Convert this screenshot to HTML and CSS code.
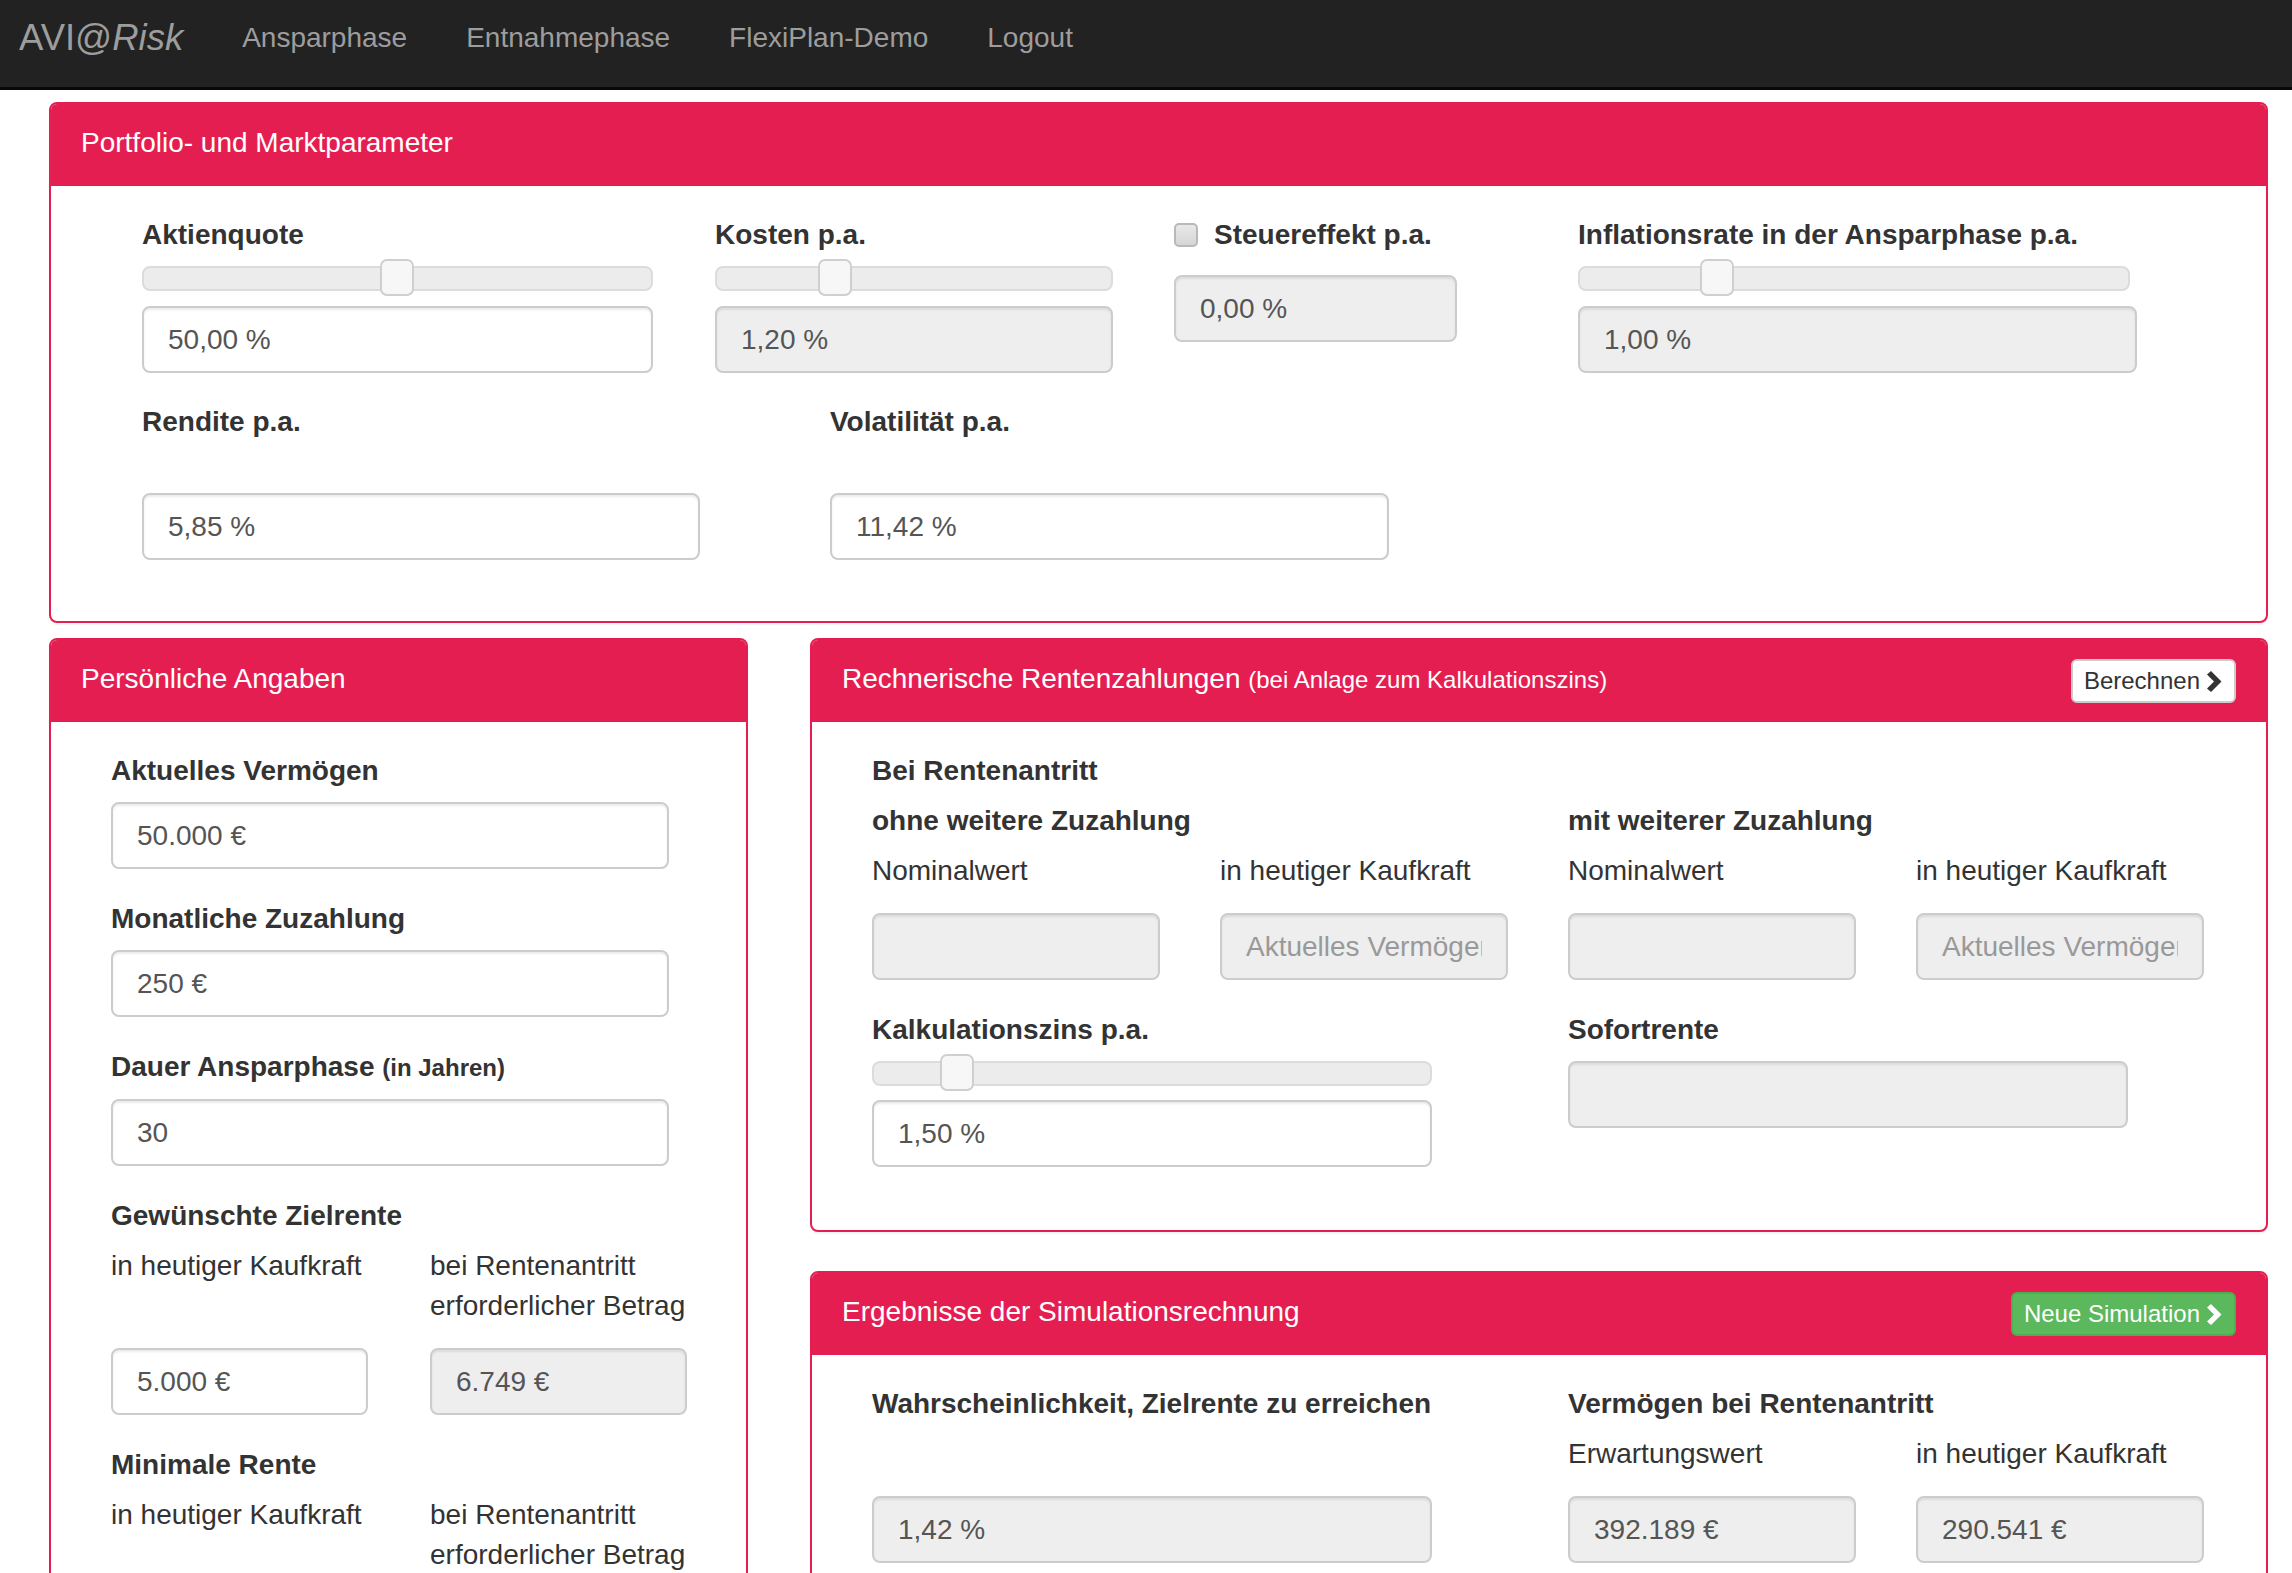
FILE: index.html
```html
<!DOCTYPE html>
<html lang="de">
<head>
<meta charset="utf-8">
<title>AVI@Risk</title>
<link rel="stylesheet" href="styles.css">
</head>
<body>
<nav class="navbar">
  <a class="brand">AVI@<i>Risk</i></a>
  <a class="nav-link">Ansparphase</a>
  <a class="nav-link">Entnahmephase</a>
  <a class="nav-link">FlexiPlan-Demo</a>
  <a class="nav-link">Logout</a>
</nav>

<main class="main">
  <section class="panel">
    <div class="panel-heading"><span class="panel-title">Portfolio- und Marktparameter</span></div>
    <div class="market-body">
      <div class="market-row">
        <div class="field w-aktien">
          <div class="label">Aktienquote</div>
          <div class="slider"><div class="track"></div><div class="thumb" style="left:238px"></div></div>
          <div class="form-control after-slider">50,00 %</div>
        </div>
        <div class="field w-kosten">
          <div class="label">Kosten p.a.</div>
          <div class="slider"><div class="track"></div><div class="thumb" style="left:103px"></div></div>
          <div class="form-control ro after-slider">1,20 %</div>
        </div>
        <div class="field w-steuer">
          <div class="label check-label"><span class="checkbox"></span>Steuereffekt p.a.</div>
          <div class="form-control ro after-check">0,00 %</div>
        </div>
        <div class="field w-infl">
          <div class="label">Inflationsrate in der Ansparphase p.a.</div>
          <div class="slider slider-short"><div class="track"></div><div class="thumb" style="left:122px"></div></div>
          <div class="form-control ro after-slider">1,00 %</div>
        </div>
      </div>
      <div class="market-row row-two">
        <div class="field w-rendite">
          <div class="label">Rendite p.a.</div>
          <div class="form-control after-gap">5,85 %</div>
        </div>
        <div class="field w-vola">
          <div class="label">Volatilität p.a.</div>
          <div class="form-control after-gap">11,42 %</div>
        </div>
      </div>
    </div>
  </section>

  <div class="lower">
    <section class="panel panel-personal">
      <div class="panel-heading"><span class="panel-title">Persönliche Angaben</span></div>
      <div class="panel-body personal-body">
        <div class="group">
          <div class="label">Aktuelles Vermögen</div>
          <div class="form-control wide">50.000 €</div>
        </div>
        <div class="group">
          <div class="label">Monatliche Zuzahlung</div>
          <div class="form-control wide">250 €</div>
        </div>
        <div class="group">
          <div class="label">Dauer Ansparphase <small>(in Jahren)</small></div>
          <div class="form-control wide">30</div>
        </div>
        <div class="group">
          <div class="label tight">Gewünschte Zielrente</div>
          <div class="sub-grid personal-grid">
            <div class="sub-label">in heutiger Kaufkraft</div>
            <div class="sub-label">bei Rentenantritt<br>erforderlicher Betrag</div>
            <div class="form-control">5.000 €</div>
            <div class="form-control ro">6.749 €</div>
          </div>
        </div>
        <div class="group">
          <div class="label tight">Minimale Rente</div>
          <div class="sub-grid personal-grid">
            <div class="sub-label">in heutiger Kaufkraft</div>
            <div class="sub-label">bei Rentenantritt<br>erforderlicher Betrag</div>
            <div class="form-control">3.000 €</div>
            <div class="form-control ro">4.049 €</div>
          </div>
        </div>
      </div>
    </section>

    <div class="right-col">
      <section class="panel panel-calc">
        <div class="panel-heading">
          <span class="panel-title">Rechnerische Rentenzahlungen <small>(bei Anlage zum Kalkulationszins)</small></span>
          <a class="btn btn-default">Berechnen<svg class="chev" viewBox="0 0 15 21" aria-hidden="true"><polygon points="0,3.5 4,0 14.5,10.5 4,21 0,17.5 7,10.5"/></svg></a>
        </div>
        <div class="panel-body calc-body">
          <div class="label tight">Bei Rentenantritt</div>
          <div class="two-col">
            <div class="col col-a">
              <div class="label tight">ohne weitere Zuzahlung</div>
              <div class="sub-grid calc-grid">
                <div class="sub-label">Nominalwert</div>
                <div class="sub-label">in heutiger Kaufkraft</div>
                <div class="form-control ro"></div>
                <div class="form-control ro"><span class="ph">Aktuelles Vermögen</span></div>
              </div>
            </div>
            <div class="col col-b">
              <div class="label tight">mit weiterer Zuzahlung</div>
              <div class="sub-grid calc-grid">
                <div class="sub-label">Nominalwert</div>
                <div class="sub-label">in heutiger Kaufkraft</div>
                <div class="form-control ro"></div>
                <div class="form-control ro"><span class="ph">Aktuelles Vermögen</span></div>
              </div>
            </div>
          </div>
          <div class="two-col group-top">
            <div class="col col-a">
              <div class="label slider-label">Kalkulationszins p.a.</div>
              <div class="slider full"><div class="track"></div><div class="thumb" style="left:68px"></div></div>
              <div class="form-control full after-slider-b">1,50 %</div>
            </div>
            <div class="col col-b">
              <div class="label">Sofortrente</div>
              <div class="form-control ro full"></div>
            </div>
          </div>
        </div>
      </section>

      <section class="panel panel-results">
        <div class="panel-heading">
          <span class="panel-title">Ergebnisse der Simulationsrechnung</span>
          <a class="btn btn-success">Neue Simulation<svg class="chev" viewBox="0 0 15 21" aria-hidden="true"><polygon points="0,3.5 4,0 14.5,10.5 4,21 0,17.5 7,10.5"/></svg></a>
        </div>
        <div class="panel-body calc-body">
          <div class="two-col">
            <div class="col col-a">
              <div class="label tight">Wahrscheinlichkeit, Zielrente zu erreichen</div>
              <div class="sub-label empty"></div>
              <div class="form-control ro full">1,42 %</div>
            </div>
            <div class="col col-b">
              <div class="label tight">Vermögen bei Rentenantritt</div>
              <div class="sub-grid calc-grid">
                <div class="sub-label">Erwartungswert</div>
                <div class="sub-label">in heutiger Kaufkraft</div>
                <div class="form-control ro">392.189 €</div>
                <div class="form-control ro">290.541 €</div>
              </div>
            </div>
          </div>
        </div>
      </section>
    </div>
  </div>
</main>
</body>
</html>
```

FILE: styles.css
```css
* { box-sizing: border-box; }

html, body { margin: 0; padding: 0; }

body {
  font-family: "Liberation Sans", Arial, Helvetica, sans-serif;
  font-size: 28px;
  line-height: 40px;
  color: #333;
  background: #fff;
}

/* ---------- navbar ---------- */
.navbar {
  display: flex;
  align-items: flex-start;
  height: 90px;
  background: #222;
  border-bottom: 3px solid #080808;
  padding: 18px 0 0 19px;
}
.brand {
  font-size: 36.5px;
  line-height: 40px;
  color: #9d9d9d;
  margin-right: 59px;
}
.brand i { font-style: italic; }
.nav-link {
  font-size: 28px;
  line-height: 40px;
  color: #9d9d9d;
  margin-right: 59px;
}

/* ---------- layout ---------- */
.main {
  padding: 12px 24px 0 49px;
}
.lower {
  display: flex;
  align-items: flex-start;
  margin-top: 15px;
}
.panel-personal { width: 699px; flex: none; }
.right-col { margin-left: 62px; width: 1458px; flex: none; min-width: 0; }
.panel-results { margin-top: 39px; }

/* ---------- panel ---------- */
.panel {
  border: 2px solid #e51e52;
  border-radius: 8px;
  background: #fff;
  box-shadow: 0 2px 2px rgba(0, 0, 0, 0.05);
  overflow: hidden;
  min-width: 0;
}
.panel-heading {
  height: 82px;
  background: #e51e52;
  color: #fff;
  padding: 19px 30px 0 30px;
  display: flex;
  justify-content: space-between;
  align-items: flex-start;
}
.panel-title { font-size: 28px; line-height: 40px; white-space: nowrap; }
.panel-title small { font-size: 24px; }

.panel-body { padding: 29px 60px 60px 60px; }
.panel-calc .panel-body { padding-bottom: 63px; }

/* ---------- buttons ---------- */
.btn {
  display: flex;
  align-items: center;
  flex: none;
  height: 44px;
  padding: 0 12px 0 11px;
  border: 2px solid #ccc;
  border-radius: 6px;
  font-size: 24px;
  line-height: 36px;
  white-space: nowrap;
}
.btn-default { background: #fff; color: #333; }
.btn-success { background: #5cb85c; border-color: #4cae4c; color: #fff; }
.chev {
  width: 15px;
  height: 21px;
  margin-left: 7px;
  fill: currentColor;
}

/* ---------- labels ---------- */
.label {
  font-weight: bold;
  line-height: 40px;
  margin-bottom: 11px;
  white-space: nowrap;
}
.label small { font-size: 24px; }
.label.tight { margin-bottom: 10px; }
.label.slider-label { margin-bottom: 4px; }
.sub-label {
  line-height: 40px;
  white-space: nowrap;
}
.sub-label.empty { height: 40px; margin-bottom: 22px; }

/* ---------- form controls ---------- */
.form-control {
  height: 67px;
  border: 2px solid #ccc;
  border-radius: 8px;
  background: #fff;
  box-shadow: inset 0 2px 2px rgba(0, 0, 0, 0.075);
  padding: 0 24px;
  font-size: 28px;
  line-height: 63px;
  color: #555;
  white-space: nowrap;
  overflow: hidden;
  min-width: 0;
}
.form-control.ro { background: #eee; }
.form-control .ph {
  display: block;
  overflow: hidden;
  color: #999;
}
.form-control.wide { width: 558px; }
.form-control.full { width: 560px; }

/* ---------- slider ---------- */
.slider {
  position: relative;
  height: 37px;
  padding-top: 7px;
}
.slider-short { margin-right: 7px; }
.slider.full { width: 560px; }
.track {
  height: 25px;
  background: #ececec;
  border: 2px solid #dcdcdc;
  border-radius: 8px;
}
.thumb {
  position: absolute;
  top: 0;
  width: 34px;
  height: 37px;
  background: #f7f7f7;
  border: 2px solid #cfcfcf;
  border-radius: 7px;
}
.after-slider { margin-top: 10px; }
.after-slider-b { margin-top: 9px; }

/* ---------- market panel ---------- */
.market-body { padding: 29px 0 61px 91px; }
.market-row { display: flex; align-items: flex-start; }
.row-two { margin-top: 29px; }
.market-row .label { margin-bottom: 4px; }
.w-aktien { width: 511px; }
.w-kosten { width: 398px; margin-left: 62px; }
.w-steuer { width: 283px; margin-left: 61px; }
.w-infl { width: 559px; margin-left: 121px; }
.w-rendite { width: 558px; }
.w-vola { width: 559px; margin-left: 130px; }

.check-label { display: flex; align-items: center; }
.checkbox {
  width: 24px;
  height: 24px;
  margin-right: 16px;
  border: 2px solid #b9b9b9;
  border-radius: 5px;
  background: linear-gradient(#e8e8e8, #d6d6d6);
}
.after-check { margin-top: 20px; }
.market-row .after-gap { margin-top: 51px; }

/* ---------- personal panel ---------- */
.group { margin-bottom: 30px; }
.sub-grid {
  display: grid;
  row-gap: 22px;
  align-items: start;
}
.personal-grid {
  grid-template-columns: 257px 257px;
  column-gap: 62px;
}

/* ---------- calc panels ---------- */
.two-col { display: flex; align-items: flex-start; }
.col { flex: none; min-width: 0; }
.col-a { width: 696px; }
.col-b { width: 638px; }
.group-top { margin-top: 30px; }
.calc-grid {
  grid-template-columns: 288px 288px;
  column-gap: 60px;
}
```
